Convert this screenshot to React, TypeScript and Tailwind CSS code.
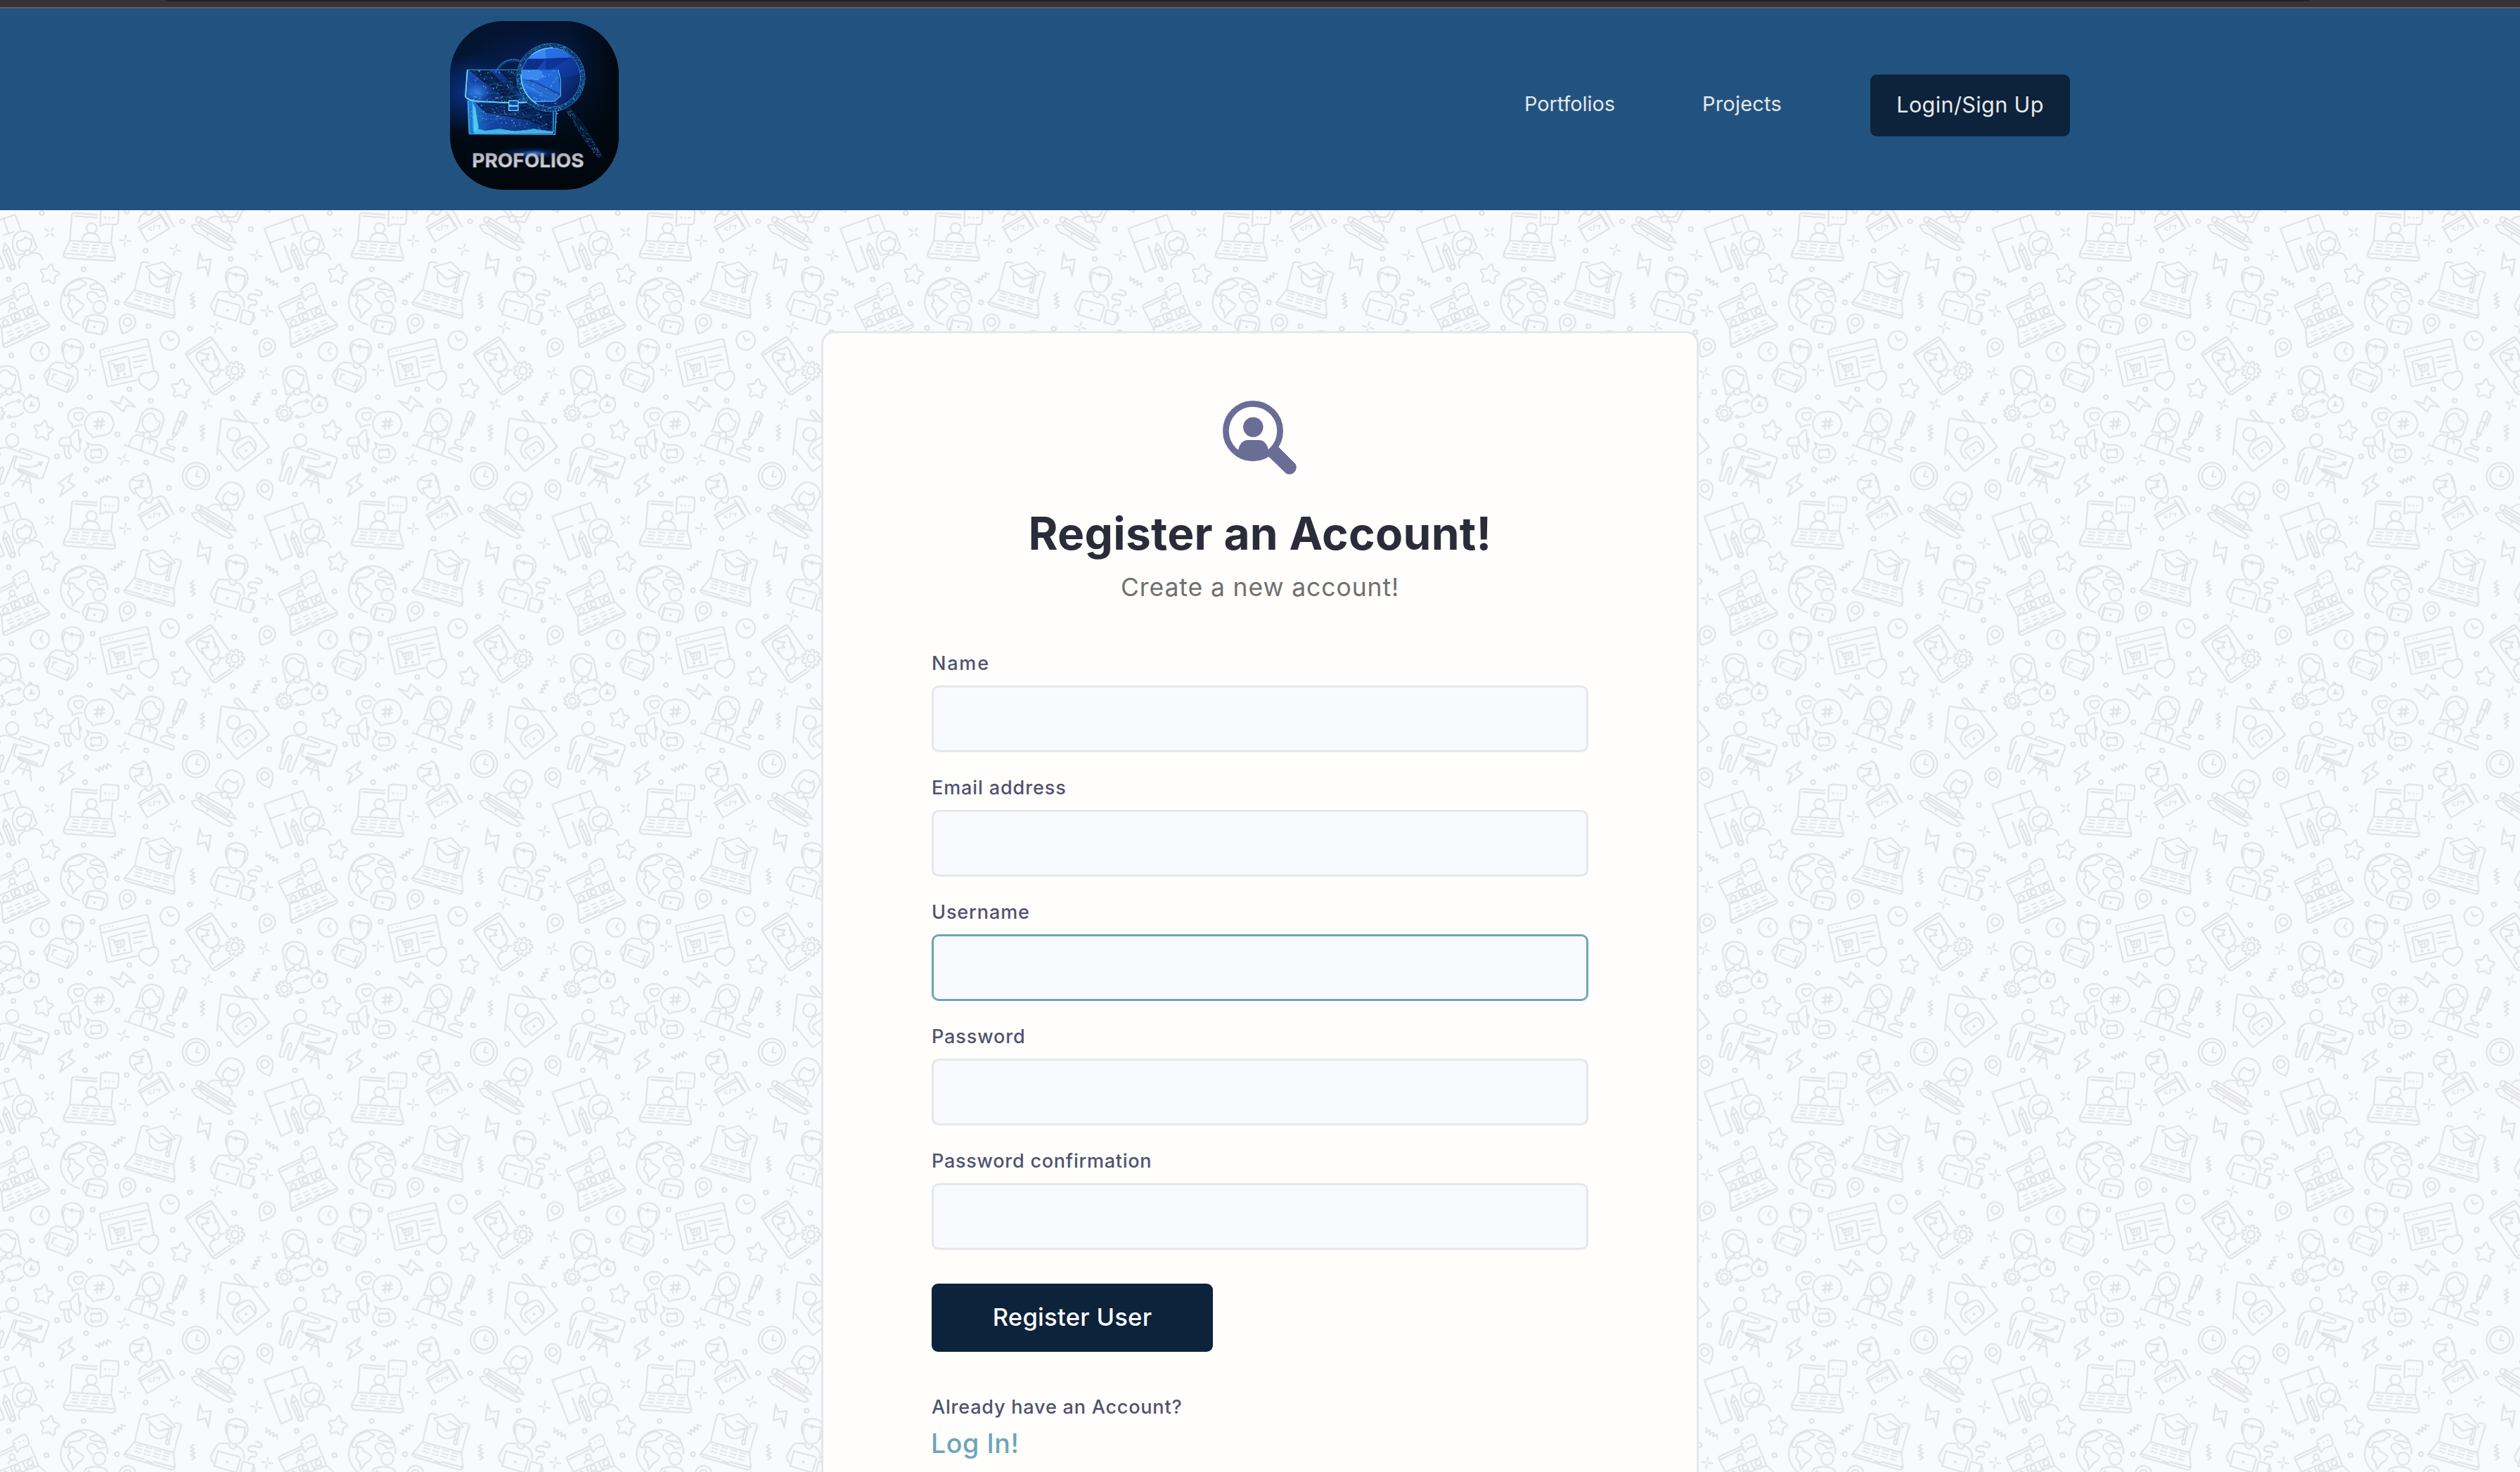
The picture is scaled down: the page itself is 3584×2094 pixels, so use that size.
import type { ReactNode } from "react";

type Spot = [number, number];

const TILE = 1228.8;

const DOTS: Spot[] = [
  [178, 1268], [541, 1260], [777, 75], [1070, 108], [621, 200], [357, 279], [985, 235], [1266, 322],
  [198, 425], [499, 421], [270, 530], [633, 522], [810, 533], [1090, 548], [395, 606], [1277, 647],
  [1000, 620], [737, 692], [552, 791], [384, 825], [643, 840], [993, 829], [1171, 803], [1365, 738],
  [259, 857], [1136, 927], [1286, 944], [501, 984], [243, 1078], [790, 1048], [624, 1104], [367, 1134],
  [935, 1128], [1149, 1099], [720, 1213], [1258, 1240], [363, 1239],
];

const SPARKS: [number, number, number][] = [
  [212, 122, 40], [534, 157, 5], [748, 195, 18], [1094, 220, 10], [1140, 457, 8],
  [922, 527, 15], [384, 710, 5], [1129, 723, 20], [883, 855, 25], [525, 1091, 20],
];

const STARS: [number, number, number][] = [[212, 298, 10], [772, 787, 8], [185, 965, 10]];

const ZIGZAGS: [number, number, number][] = [
  [505, 315, -38], [822, 413, 85], [1160, 333, 32], [1094, 832, -60], [864, 975, 90], [441, 1177, -22],
];

function Keys({ x, y, dx, dy, angle, len = 26 }: { x: number; y: number; dx: number; dy: number; angle: number; len?: number }) {
  return (
    <g strokeWidth="5.5">
      {[0, 1, 2, 3].map((col) =>
        [0, 1, 2].map((row) => (
          <path
            key={`${col}-${row}`}
            transform={`translate(${x + col * dx - row * (angle < -10 ? -7 : 4)} ${y + col * dy + row * 14}) rotate(${angle})`}
            d={`M0 0 H${len}`}
          />
        )),
      )}
    </g>
  );
}

function Gear({ x, y, r }: { x: number; y: number; r: number }) {
  const pts: string[] = [];
  for (let i = 0; i < 9; i++) {
    const a = (i * 40 * Math.PI) / 180;
    const at = (rad: number, off: number) =>
      `${(x + rad * Math.cos(a + off)).toFixed(1)} ${(y + rad * Math.sin(a + off)).toFixed(1)}`;
    pts.push(at(r * 0.76, -0.24), at(r, -0.16), at(r, 0.16), at(r * 0.76, 0.24));
  }
  return (
    <g>
      <path d={`M${pts.join(" L")} Z`} />
      <circle cx={x} cy={y} r={r * 0.42} />
    </g>
  );
}

function Pin({ x, y, angle }: { x: number; y: number; angle: number }) {
  return (
    <g transform={`translate(${x} ${y}) rotate(${angle})`}>
      <path d="M-32 12 A34 34 0 1 1 32 12 Q22 36 0 54 Q-22 36 -32 12 Z" />
      <circle r="17" />
    </g>
  );
}

function ShortHair() {
  return (
    <g>
      <path d="M-36 18 Q-52 -22 -28 -42 Q6 -60 36 -40 Q62 -16 46 22 L36 36" />
      <path d="M-28 -30 L4 -10 L-2 -24 Q20 -10 40 -14 Q42 56 0 58 Q-38 56 -36 -6 Z" />
      <path d="M-26 56 Q-28 76 -12 79 Q6 76 3 60" />
    </g>
  );
}

function Doodles() {
  return (
    <g id="doodles">
      {DOTS.map(([x, y]) => (
        <circle key={`${x}-${y}`} cx={x} cy={y} r="9" />
      ))}
      {SPARKS.map(([x, y, a]) => (
        <path key={`${x}-${y}`} transform={`translate(${x} ${y}) rotate(${a})`} d="M-24 0 H-8 M8 0 H24 M0 -24 V-8 M0 8 V24" />
      ))}
      {STARS.map(([x, y, a]) => (
        <path
          key={`${x}-${y}`}
          transform={`translate(${x} ${y}) rotate(${a})`}
          d="M-5 -38 Q0 -43 5 -38 L15 -17 L36 -14 Q43 -11 39 -4 L24 11 L28 33 Q26 40 19 38 L0 28 L-19 38 Q-27 40 -28 33 L-24 11 L-39 -4 Q-43 -11 -36 -14 L-15 -17 Z"
        />
      ))}
      {ZIGZAGS.map(([x, y, a]) => (
        <path
          key={`${x}-${y}`}
          transform={`translate(${x} ${y}) rotate(${a})`}
          d="M-32 -8 L-24 9 L-14 -9 L-6 9 L4 -9 L12 9 L22 -9 L32 6"
        />
      ))}

      <path d="M852 206 L863 242 L900 236 L888 308 L877 267 L842 277 Z" />
      <path d="M470 840 L511 853 L523 820 L578 867 L540 860 L525 887 Z" />
      <path d="M310 1150 L248 1193 L273 1205 L256 1247 L319 1202 L291 1186 Z" />

      <Pin x={544} y={504} angle={22} />
      <Pin x={1141} y={607} angle={30} />
      <Pin x={1130} y={1213} angle={-22} />

      <circle cx="724" cy="583" r="40" />
      <path d="M714 564 L724 584 L741 577" />
      <circle cx="1399" cy="631" r="40" />
      <path d="M1410 612 L1399 630 L1412 643" />
      <circle cx="836" cy="1162" r="57" />
      <circle cx="836" cy="1162" r="42" />
      <path d="M843 1142 L836 1163 L853 1166" />

      {/* video call laptop */}
      <path d="M413 46 L320 39 Q307 38 306 52 L298 157 L475 168 L480 98 M320 52 L413 59" />
      <path d="M298 157 L272 209 Q268 226 284 231 L480 244 Q493 242 492 228 L475 168 M274 212 L364 218 M374 225 L394 227 M400 221 L490 228" />
      <Keys x={312} y={171} dx={42} dy={2.6} angle={4} />
      <circle cx="391" cy="104" r="22" />
      <path d="M350 160 Q352 124 388 124 Q424 126 425 164" />
      <path d="M427 95 L430 35 Q431 20 446 20 L494 23 Q508 25 507 38 L504 76 Q502 89 490 89 L450 86 Z" />
      <path strokeWidth="9" d="M449 58 h0.1 M466 59 h0.1 M483 60 h0.1" />

      {/* coder */}
      <path d="M575 1240 Q548 1215 555 1188 Q562 1164 592 1160 Q606 1158 612 1148 Q646 1168 642 1212" />
      <path d="M566 1176 Q588 1186 612 1180 L598 1200 L610 1206 L574 1214 Q582 1250 612 1257 Q644 1258 648 1232 Q648 1205 628 1172" />
      <path d="M620 1257 Q620 1275 635 1277 Q652 1274 650 1254 M593 1307 Q595 1275 622 1266 M652 1258 L676 1250 Q695 1244 704 1258 L742 1326 M676 1262 L712 1326" />
      <path d="M591 1328 L686 1274 L723 1333 L628 1391 Z M597 1338 L691 1284" />
      <path strokeWidth="5" d="M641 1327 L633 1337 L646 1341 M656 1340 L658 1318 M668 1323 L683 1321 L678 1333" />

      {/* artist with pencil and brush */}
      <path d="M945 1282 L920 1256 Q950 1186 990 1188 Q1040 1195 1042 1245 L1010 1308 L975 1302" />
      <path d="M1014 1232 Q1004 1252 974 1228 Q944 1250 951 1268 Q970 1292 1000 1284 Q1026 1262 1012 1240" />
      <circle cx="957" cy="1294" r="14" />
      <path d="M887 1297 Q905 1275 944 1287 M970 1302 Q998 1322 988 1346" />
      <path d="M858 1288 L984 1364 L1008 1396 L970 1387 L842 1307 M854 1302 L976 1378 M984 1364 L970 1387" />
      <circle cx="848" cy="1297" r="12" />
      <path d="M818 1321 Q850 1310 862 1337 L886 1350 Q982 1402 990 1418 Q988 1428 974 1426 Q940 1416 892 1381 L854 1357 Q830 1354 818 1321 Z M890 1350 L884 1364" />

      {/* designer with papers */}
      <path d="M1318 110 L1293 46 L1128 105 L1199 291 L1247 270 L1213 179 M1245 66 L1265 125 M1243 134 L1287 119 M1153 165 L1213 145" />
      <path d="M1249 167 L1242 202 L1272 276 Q1284 288 1295 270 L1268 190 Z M1242 202 L1268 190 M1254 200 L1280 262" />
      <circle cx="1283" cy="270" r="10" />
      <path d="M1330 214 L1300 218 L1284 188 Q1275 118 1330 116 Q1360 118 1370 145 L1386 188 L1358 212" />
      <path d="M1303 160 Q1318 158 1330 150 L1337 140 Q1345 152 1362 152 Q1368 178 1352 196 Q1328 208 1310 195 Q1295 178 1303 160 Z" />
      <circle cx="1346" cy="208" r="12" />
      <path d="M1334 220 Q1298 236 1313 272 M1360 212 Q1405 202 1410 238" />

      {/* graduation laptop */}
      <path d="M635 251 L612 248 Q604 248 601 258 L574 368 L740 414 L773 300 Q773 289 746 287" />
      <path d="M574 368 L532 418 Q530 430 540 433 L730 487 Q745 490 746 475 L740 414 M532 419 L615 442 M625 448 L650 458 M655 453 L744 477" />
      <Keys x={583} y={380} dx={39} dy={11} angle={15} />
      <path d="M622 268 L697 248 L748 303 L678 322 Z M685 280 L735 305 M640 290 Q626 350 680 354 Q706 352 718 332 M722 312 L711 360 M733 308 L722 362" />
      <ellipse cx="715" cy="370" rx="7" ry="10" />

      {/* man with coffee */}
      <g transform="translate(1005 320)">
        <ShortHair />
      </g>
      <path d="M977 376 L940 374 Q930 376 924 386 L899 430 Q896 445 915 462 M1005 385 Q1046 395 1041 442" />
      <path d="M930 408 L1018 431 Q1028 434 1025 443 L1007 499 L914 472 Z" />
      <circle cx="970" cy="454" r="3" />
      <path d="M1036 451 L1084 466 L1068 515 Q1060 518 1024 503 Z M1078 472 Q1096 482 1078 502 L1071 502" />
      <path d="M1060 447 Q1065 425 1088 432 Q1102 425 1090 410 Q1060 415 1058 398 Q1062 380 1088 387 Q1115 398 1118 382 Q1115 368 1092 368" />

      {/* conference laptop */}
      <path d="M1287 387 L1193 430 Q1187 435 1190 443 L1236 530 L1394 470 L1360 390 M1196 444 L1287 400" />
      <path d="M1236 530 L1241 603 Q1246 615 1260 610 L1434 529 Q1445 520 1437 511 L1394 470 M1243 600 L1318 566 M1330 566 L1350 555 M1354 549 L1438 514" />
      <path d="M1219 497 L1366 434 M1272 474 L1289 508 M1325 452 L1341 488" />
      <Keys x={1258} y={550} dx={37} dy={-15} angle={-24} len={22} />
      {([[1281, 433], [1252, 507], [1303, 480], [1358, 457]] as Spot[]).map(([x, y]) => (
        <g key={x}>
          <circle cx={x} cy={y} r="12" />
          <path d={`M${x - 16} ${y + 28} Q${x - 12} ${y + 12} ${x + 4} ${y + 13} Q${x + 18} ${y + 10} ${x + 20} ${y + 16}`} />
        </g>
      ))}
      <path d="M1290 388 Q1278 366 1290 358 L1326 338 Q1341 335 1345 348 L1353 370 Q1355 381 1342 387 L1314 396 L1302 413 Z" />
      <path strokeWidth="8" d="M1294 375 h0.1 M1311 369 h0.1 M1328 362 h0.1" />

      {/* globe */}
      <path d="M340 515 A100 100 0 1 1 459 418" />
      <path d="M272 388 Q276 350 300 340 Q330 322 345 324 L368 338 Q370 348 352 350 L338 364 Q318 366 300 368 Q290 378 292 388 Q282 396 272 388" />
      <path d="M300 388 L318 394 Q318 408 330 410 L357 430 Q352 446 342 452 L328 462 L312 487 L304 452 Q288 440 290 428 L300 414 Q290 404 300 388 Z" />
      <path d="M384 350 Q404 336 424 342 Q446 352 449 370 Q438 376 428 366 L398 364 Q384 362 384 350 Z M392 422 L374 402 Q366 380 384 376 Q404 374 412 384 L424 398 L446 392" />
      <ellipse cx="424" cy="440" rx="26" ry="27" />
      <path d="M367 543 L353 520 Q352 508 368 482 Q400 466 446 482 Q460 490 459 510 L455 538 L433 558 M380 490 L367 543" />
      <path d="M375 496 L440 507 Q447 510 445 516 L432 557 L367 545 Z" />
      <circle cx="403" cy="525" r="3" />

      {/* man with tablet */}
      <g transform="translate(305 626) scale(0.97)">
        <ShortHair />
      </g>
      <path d="M270 680 L240 676 Q228 678 218 688 L191 726 Q188 738 205 766 M302 686 Q332 696 332 720 L330 760 Q312 786 290 804" />
      <path d="M220 704 L305 734 Q315 738 313 744 L286 804 L200 770 L212 712 Q214 704 220 704 Z" />
      <path d="M240 728 L228 726 L222 750 M294 750 L286 776 L276 776" />
      <path strokeDasharray="1 11" d="M232 758 L272 774" />

      {/* shopping page */}
      <path d="M656 708 L632 585 Q629 574 618 577 L432 622 Q424 625 426 634 L459 780 L583 752 M430 654 L635 607" />
      <path strokeWidth="7" d="M448 632 h0.1 M464 628 h0.1 M480 625 h0.1" />
      <path d="M462 674 L540 652 Q547 651 549 658 L562 735 L477 752 Z M565 655 L620 644 M570 675 L627 665 M573 698 L607 691" />
      <path d="M474 682 L486 684 L500 718 L528 710 L530 682 L488 692 M504 696 V706 M516 694 V704" />
      <circle cx="504" cy="732" r="3" />
      <circle cx="532" cy="726" r="3" />
      <path d="M640 795 Q590 772 592 745 Q600 714 635 722 Q660 704 674 725 Q684 764 640 795 Z" />

      {/* profile card */}
      <path d="M973 672 L905 573 Q898 566 889 572 L796 634 Q790 640 796 648 L905 808 Q912 817 924 812 L997 763 M800 646 L903 580 M912 804 L982 758" />
      <path d="M864 692 Q836 668 838 648 Q846 622 878 620 Q894 618 899 610 Q922 632 918 664" />
      <path d="M852 634 Q870 644 894 640 L880 656 L892 664 L860 668 Q870 708 896 718 Q930 714 935 690 Q932 660 912 640" />
      <path d="M906 718 Q910 734 924 734 Q940 728 936 706 M910 790 L896 766 Q892 742 916 736 M940 712 L956 708" />
      <Gear x={1003} y={712} r={40} />

      {/* time management */}
      <path d="M1222 814 L1206 738 Q1204 694 1260 691 Q1302 694 1308 734 L1320 794 Q1310 802 1290 806" />
      <path d="M1244 710 Q1262 706 1270 722 Q1280 732 1296 730 Q1296 784 1262 790 Q1228 784 1220 750 Q1224 716 1244 710 Z M1222 814 Q1240 810 1254 798" />
      <circle cx="1269" cy="802" r="14" />
      <path d="M1222 852 Q1220 824 1250 812 M1286 804 Q1322 800 1334 824 M1250 862 Q1280 838 1318 842 M1306 834 L1318 842 L1308 850 M1328 890 Q1308 914 1260 908 M1272 900 L1260 908 L1272 914" />
      <circle cx="1363" cy="857" r="34" />
      <path d="M1351 818 L1362 820 M1356 814 L1364 815 M1388 826 L1394 832 M1363 844 L1364 858 L1374 862 L1356 862 Z" />
      <Gear x={1213} y={893} r={35} />

      {/* social megaphone */}
      <path d="M372 890 Q352 866 322 872 Q290 880 290 910 Q292 930 308 938 L310 954 Q325 944 352 944 M322 892 Q334 898 340 890 Q358 892 354 908 Q348 924 334 924 Q316 918 316 902 Q316 894 322 892" />
      <path d="M392 988 Q362 970 362 938 Q366 888 424 886 Q482 888 485 940 Q478 992 420 990 L396 999 Z" />
      <path d="M418 916 L412 962 M438 914 L430 960 M402 930 L446 928 M402 948 L446 944" />
      <path d="M370 1018 L378 1038 Q358 1048 362 1072 Q370 1104 410 1105 Q456 1102 459 1066 Q454 1030 412 1028 L392 1030 Z" />
      <path d="M388 1060 V1050 H432 L424 1044 M432 1050 V1074 M432 1082 H388 M388 1082 L396 1088 M388 1082 V1072" />
      <path d="M252 1018 Q254 1000 272 998 L298 996 L326 964 L334 966 L342 1050 L332 1058 L306 1032 L266 1032 Q252 1032 252 1018 Z M300 996 L304 1032 M336 1000 Q352 1004 342 1020 M272 1034 L278 1072 Q288 1092 302 1084 Q306 1078 294 1064 L292 1034" />

      {/* writer */}
      <path d="M612 976 L580 972 Q596 936 600 912 Q612 872 648 873 Q704 880 698 928 L680 982 Q668 1000 642 992" />
      <path d="M608 940 Q604 904 640 894 Q656 892 660 910 Q668 930 682 928 Q682 968 642 972 Q612 968 608 940 Z" />
      <circle cx="627" cy="987" r="14" />
      <path d="M612 990 L582 986 Q566 992 560 1004 L550 1032 M642 1002 Q672 1010 672 1026 L656 1068 M616 1000 Q606 1020 602 1050 M636 1002 L640 1022" />
      <path d="M530 1029 L736 1101 Q746 1098 742 1086 L694 1066 Q676 1052 694 1044 Q720 1036 740 1052 Q756 1036 726 1034 Q702 1022 718 1006 L736 1006" />
      <path d="M770 888 Q784 880 790 894 L754 984 L738 998 L738 976 Z M790 894 L798 900 L780 950 M740 976 L756 984 M762 930 L776 936" />

      {/* home worker */}
      <path d="M1099 937 L944 916 L925 1072 M928 1042 L1010 1143 L1149 1037 L1072 934 M1030 926 L998 894 Q1004 878 1016 882 L1056 932" />
      <circle cx="997" cy="984" r="28" />
      <path d="M1016 1087 Q992 1072 993 1048 Q998 1020 1032 1002 Q1056 986 1074 1000 Q1092 1014 1092 1036 L1088 1054" />
      <path d="M1012 1048 L1058 1016 Q1066 1014 1070 1022 L1090 1052 L1040 1092 L1014 1060 Q1010 1054 1012 1048 Z" />
      <circle cx="1050" cy="1053" r="3" />

      {/* presenter */}
      <ellipse cx="1281" cy="1010" rx="27" ry="28" />
      <path d="M1204 1118 Q1200 1046 1244 1040 Q1266 1038 1284 1048 L1360 1074 Q1370 1084 1358 1090 Q1344 1092 1290 1076 L1246 1190 Q1236 1202 1226 1190 L1244 1130 Q1240 1118 1230 1128 L1210 1180 Q1200 1190 1192 1176 L1216 1096 L1230 1066" />
      <path d="M1312 1052 Q1316 1042 1328 1046 L1430 1080 Q1440 1084 1438 1094 L1412 1166 Q1406 1176 1390 1172 L1294 1130 Q1286 1126 1288 1116 L1298 1082" />
      <path d="M1312 1116 Q1366 1134 1404 1106 M1392 1104 L1408 1102 L1404 1118 Z M1310 1130 L1386 1158 Q1390 1168 1380 1168 L1306 1142 Z M1328 1154 L1280 1202 M1346 1162 L1324 1208 M1354 1162 L1362 1232 M1310 1178 L1362 1194" />
    </g>
  );
}

function Wallpaper() {
  return (
    <svg className="absolute inset-0 h-full w-full" aria-hidden="true">
      <defs>
        <Doodles />
        <pattern id="wallpaper" width={TILE} height={TILE} patternUnits="userSpaceOnUse" patternTransform="translate(0 -9) scale(0.33333)">
          <g fill="none" stroke="#e2e2e5" strokeWidth="6.6" strokeLinecap="round" strokeLinejoin="round">
            <use href="#doodles" />
            <use href="#doodles" x={-TILE} />
            <use href="#doodles" y={-TILE} />
            <use href="#doodles" x={-TILE} y={-TILE} />
          </g>
        </pattern>
      </defs>
      <rect width="100%" height="100%" fill="url(#wallpaper)" />
    </svg>
  );
}

/* Deterministic scatter of glowing specks. */
function scatter(count: number, seed: number) {
  let s = seed;
  const next = () => {
    s = (s * 16807) % 2147483647;
    return s / 2147483647;
  };
  return Array.from({ length: count }, () => [next(), next(), next()] as [number, number, number]);
}

function Logo() {
  const caseSpecks = scatter(380, 77);
  const ringSpecks = scatter(520, 913);
  const handleSpecks = scatter(180, 4021);
  const web = scatter(60, 555);
  return (
    <svg viewBox="120 90 720 720" className="h-60 w-60 rounded-[76px]" role="img" aria-label="Profolios">
      <defs>
        <linearGradient id="lg-bg" x1="0" y1="0" x2="0" y2="1">
          <stop offset="0" stopColor="#04132f" />
          <stop offset="0.35" stopColor="#031634" />
          <stop offset="0.7" stopColor="#010a14" />
          <stop offset="1" stopColor="#01060c" />
        </linearGradient>
        <radialGradient id="lg-glow">
          <stop offset="0" stopColor="#0b3fae" stopOpacity="0.7" />
          <stop offset="1" stopColor="#0b3fae" stopOpacity="0" />
        </radialGradient>
        <radialGradient id="lg-shine">
          <stop offset="0" stopColor="#3f90ff" stopOpacity="0.8" />
          <stop offset="1" stopColor="#3f90ff" stopOpacity="0" />
        </radialGradient>
        <linearGradient id="lg-edge" x1="0" y1="0" x2="1" y2="0">
          <stop offset="0.7" stopColor="#01060c" stopOpacity="0" />
          <stop offset="1" stopColor="#01060c" stopOpacity="0.9" />
        </linearGradient>
        <linearGradient id="lg-flap" x1="0" y1="0" x2="1" y2="0.3">
          <stop offset="0" stopColor="#1a55c4" />
          <stop offset="0.35" stopColor="#12398e" />
          <stop offset="0.6" stopColor="#0a2258" />
          <stop offset="1" stopColor="#1d62c4" />
        </linearGradient>
        <linearGradient id="lg-body" x1="0" y1="0" x2="1" y2="0">
          <stop offset="0" stopColor="#2482dc" />
          <stop offset="0.25" stopColor="#1446a4" />
          <stop offset="1" stopColor="#0a2868" />
        </linearGradient>
        <linearGradient id="lg-lens" x1="0" y1="0.1" x2="1" y2="0.75">
          <stop offset="0" stopColor="#1d5ee0" />
          <stop offset="0.5" stopColor="#1442b0" />
          <stop offset="1" stopColor="#081e5c" />
        </linearGradient>
        <linearGradient id="lg-silver" x1="0" y1="0" x2="0" y2="1">
          <stop offset="0" stopColor="#a4a4ad" />
          <stop offset="0.5" stopColor="#c4c5cd" />
          <stop offset="1" stopColor="#e6e7ee" />
        </linearGradient>
        <clipPath id="lg-lens-clip">
          <circle cx="550" cy="331" r="128" />
        </clipPath>
      </defs>
      <rect x="120" y="90" width="720" height="720" fill="url(#lg-bg)" />
      <ellipse cx="210" cy="400" rx="200" ry="170" fill="url(#lg-glow)" />
      <ellipse cx="480" cy="280" rx="300" ry="160" fill="url(#lg-glow)" opacity="0.4" />
      <rect x="120" y="90" width="720" height="720" fill="url(#lg-edge)" />
      <ellipse cx="465" cy="654" rx="150" ry="26" fill="url(#lg-glow)" />
      <ellipse cx="480" cy="656" rx="60" ry="16" fill="url(#lg-shine)" />

      {/* briefcase */}
      <path d="M322 300 Q345 256 392 256 Q436 258 462 300" fill="none" stroke="#123f80" strokeWidth="11" />
      <path d="M318 300 Q343 254 392 253 Q440 256 466 300" fill="none" stroke="#58c6f2" strokeWidth="3" strokeDasharray="4 6" />
      <path d="M194 428 L582 428 L568 574 L202 572 Z" fill="url(#lg-body)" />
      <path d="M230 440 L560 440 L562 560 L470 520 Q330 490 270 480 Z" fill="#061a48" opacity="0.85" />
      <path d="M226 546 L270 558 L330 550 L400 560 L480 550 L560 562 L560 570 L222 570 Z" fill="#4fd2f6" opacity="0.8" />
      <path d="M218 440 L228 460 L242 545 L222 562 Z" fill="#5adcf8" opacity="0.85" />
      <path d="M194 298 L582 298 L592 410 L565 432 L392 438 L205 430 L186 412 Z" fill="url(#lg-flap)" />
      <path d="M200 300 L290 300 L410 420 L412 436 L372 436 Z" fill="#061a40" opacity="0.85" />
      <path d="M330 300 L420 300 L440 380 L420 400 Z" fill="#061a40" opacity="0.75" />
      <ellipse cx="235" cy="395" rx="62" ry="46" fill="url(#lg-shine)" />
      <path d="M194 298 H582 L592 410 L568 432 L392 440 L205 430 L186 412 Z" fill="none" stroke="#2f9fdc" strokeWidth="3" />
      <path d="M194 298 L186 412 Q196 430 240 432 L392 440 L540 430 Q580 428 592 410" fill="none" stroke="#72e0fb" strokeWidth="5" />
      <path d="M196 430 L202 572 L568 574 L576 430 M216 434 L220 560 L560 562 L562 432" fill="none" stroke="#3fb6ee" strokeWidth="4" />
      <g stroke="#3f9fe0" strokeWidth="1" opacity="0.55">
        {web.slice(0, 59).map(([a, b], i) => (
          <line key={i} x1={205 + a * 350} y1={305 + b * 260} x2={205 + web[i + 1][0] * 350} y2={305 + ((b + web[i + 1][1]) / 2) * 260} />
        ))}
      </g>
      <rect x="371" y="430" width="40" height="42" fill="#0e47a6" stroke="#68d8ff" strokeWidth="4" />
      <path d="M372 452 H410" stroke="#a9f3ff" strokeWidth="5" />

      {/* magnifier */}
      <circle cx="550" cy="331" r="128" fill="url(#lg-lens)" opacity="0.9" />
      <g clipPath="url(#lg-lens-clip)">
        <path d="M528 200 H590 L640 245 L528 250 Z" fill="#2f7cf6" opacity="0.75" />
        <path d="M450 246 Q480 205 528 200 V250 L440 250 Z" fill="#3f90ff" opacity="0.85" />
        <path d="M528 250 L640 245 L545 298 L528 298 Z" fill="#0e2f92" opacity="0.75" />
        <path d="M440 252 H526 L490 298 H420 Z" fill="#0a2470" opacity="0.7" />
        <path d="M640 245 L545 298 H582 L600 331 Q650 330 690 300 Z" fill="#1646b4" opacity="0.35" />
        <path d="M415 298 H582 L592 412 L566 432 L440 436 Z" fill="#2b7bf0" opacity="0.7" />
        <path d="M420 298 H500 L526 330 L470 345 L420 330 Z" fill="#4a9dff" opacity="0.6" />
        <path d="M420 345 L470 340 L592 400 L588 416 L560 428 Z" fill="#123c9c" opacity="0.75" />
        <path d="M422 340 L480 352 L590 408 L566 430 L440 372 Z" fill="#3f97f6" opacity="0.45" />
        <path d="M430 380 L540 428 L520 460 L470 440 Z" fill="#1c5fd0" opacity="0.8" />
        <path d="M566 432 L562 462 H480 L470 436 Z" fill="#0a2870" opacity="0.85" />
        <path d="M582 298 L592 340 V410 L566 432 M440 434 L566 432" fill="none" stroke="#5fcdf8" strokeWidth="3" />
      </g>
      <g fill="#63cff5">
        {caseSpecks.map(([a, b, c], i) => (
          <circle key={i} cx={195 + a * 385} cy={300 + b * 268} r={0.9 + c * 1.7} opacity={0.35 + c * 0.6} />
        ))}
      </g>
      <circle cx="550" cy="331" r="137" fill="none" stroke="#0b3570" strokeWidth="17" />
      <circle cx="550" cy="331" r="146" fill="none" stroke="#2f86cc" strokeWidth="2" />
      <circle cx="550" cy="331" r="127" fill="none" stroke="#4ab4ee" strokeWidth="2" />
      <path d="M423 320 Q424 400 490 443" fill="none" stroke="#6fe6ff" strokeWidth="5" opacity="0.9" />
      <path d="M470 234 Q505 205 560 204" fill="none" stroke="#6fd6ff" strokeWidth="4" opacity="0.8" />
      <g fill="#5fcdf2">
        {ringSpecks.map(([a, b, c], i) => {
          const t = a * Math.PI * 2;
          const r = 129 + b * 17;
          return <circle key={i} cx={550 + r * Math.cos(t)} cy={331 + r * Math.sin(t)} r={0.8 + c * 1.1} opacity={0.3 + c * 0.6} />;
        })}
      </g>
      <path d="M616 470 L632 462 L690 534 L768 664 L752 672 L692 596 L650 516 Z" fill="#03112a" stroke="#0e417e" strokeWidth="2" />
      <g fill="#3fa9dc">
        {handleSpecks.map(([a, b, c], i) => (
          <circle key={i} cx={624 + a * 134 + (b - 0.5) * 20} cy={470 + a * 196 - (b - 0.5) * 12} r={0.8 + c * 1.3} opacity={0.25 + c * 0.65} />
        ))}
      </g>

      <text
        x="214"
        y="715"
        textLength="478"
        lengthAdjust="spacingAndGlyphs"
        fill="url(#lg-silver)"
        stroke="#8b8c95"
        strokeWidth="2"
        className="font-['Inter'] text-[82px] font-bold"
      >
        PROFOLIOS
      </text>
    </svg>
  );
}

function PersonSearchIcon() {
  return (
    <svg viewBox="0 0 106 106" className="h-[106px] w-[106px] text-[#6a6d95]" fill="currentColor" aria-hidden="true">
      <circle cx="43" cy="43" r="38.6" fill="none" stroke="currentColor" strokeWidth="8.8" />
      <circle cx="43.3" cy="37.6" r="14.2" />
      <path d="M36 56 H51 C60 56 65 64 65.5 75 C60 82 52 85.7 43 85.7 C34 85.7 26 81 21.5 75 C22 64 27 56 36 56 Z" />
      <path d="M79 66 L103 90 A9.5 9.5 0 0 1 90 103 L65.5 79.3 Z" stroke="currentColor" strokeWidth="1" />
    </svg>
  );
}

function Field({ label, active = false, labelClass = "tracking-[0.9px]" }: { label: string; active?: boolean; labelClass?: string }) {
  return (
    <label className="block">
      <span className={`block h-10 text-[27px] leading-10 font-medium text-[#50536f] ${labelClass}`}>{label}</span>
      <input
        className={`mt-[11px] block h-[95px] w-full rounded-[10px] border-[3px] bg-[#f9fafe] px-6 text-[27px] outline-none ${
          active ? "border-[#6ba6b9]" : "border-[#e4e7eb]"
        }`}
      />
    </label>
  );
}

function NavLink({ children, className }: { children: ReactNode; className: string }) {
  return <a className={`block pb-1 leading-10 whitespace-nowrap text-[#e6e7ea] ${className}`}>{children}</a>;
}

export default function App() {
  return (
    <div className="flex h-[2094px] w-[3584px] flex-col overflow-hidden bg-[#f9fafe] font-['Inter',sans-serif]">
      <div className="h-3 shrink-0 border-b-2 border-[#606064] bg-[#353539] pl-[235px]">
        <div className="h-0.5 w-[3050px] rounded-b-sm bg-[#212124]" />
      </div>

      <header className="h-[287px] shrink-0 bg-[#225380] pt-[18px]">
        <div className="mx-auto flex h-60 w-[2304px] items-center justify-between">
          <Logo />
          <nav className="flex items-center gap-[125px]">
            <NavLink className="w-[128px] text-[28.8px]">Portfolios</NavLink>
            <NavLink className="w-[114px] text-[29px] tracking-[0.2px]">Projects</NavLink>
            <a className="flex h-[88px] w-[284px] items-center justify-center rounded-[9px] bg-[#0c233b] pb-0.5 text-[30.5px] tracking-[0.4px] text-[#e8e9eb]">
              Login/Sign Up
            </a>
          </nav>
        </div>
      </header>

      <main className="relative flex grow justify-center pt-[172px]">
        <Wallpaper />
        <section className="relative h-[1900px] w-[1248px] shrink-0 rounded-t-[18px] border-[3px] border-[#e4e7eb] bg-[#fffefd] px-[154px] pt-24">
          <div className="flex flex-col items-center">
            <PersonSearchIcon />
            <h1 className="mt-[35px] h-24 text-[64px] leading-[96px] font-bold tracking-[0.3px] whitespace-nowrap text-[#2b2c39]">
              Register an Account!
            </h1>
            <p className="mt-[2px] h-[54px] text-[35.5px] leading-[54px] tracking-[0.9px] text-[#6f6f70]">Create a new account!</p>
          </div>

          <form className="mt-[61px] flex flex-col items-start">
            <div className="flex w-full flex-col gap-[31px]">
              <Field label="Name" labelClass="tracking-[1.8px]" />
              <Field label="Email address" />
              <Field label="Username" active />
              <Field label="Password" />
              <Field label="Password confirmation" labelClass="tracking-[0.75px]" />
            </div>
            <button
              type="button"
              className="mt-12 flex h-[97px] w-[400px] items-center justify-center rounded-[9px] bg-[#0c233b] pb-px text-[34.5px] font-medium tracking-[0.3px] text-white"
            >
              Register User
            </button>
            <p className="mt-[59px] h-10 text-[27px] leading-10 font-medium tracking-[0.8px] text-[#50536f]">Already have an Account?</p>
            <a className="mt-[5px] -ml-px text-[37.5px] leading-[54px] font-medium tracking-[0.6px] text-[#6ba6b9]">Log In!</a>
          </form>
        </section>
      </main>
    </div>
  );
}
